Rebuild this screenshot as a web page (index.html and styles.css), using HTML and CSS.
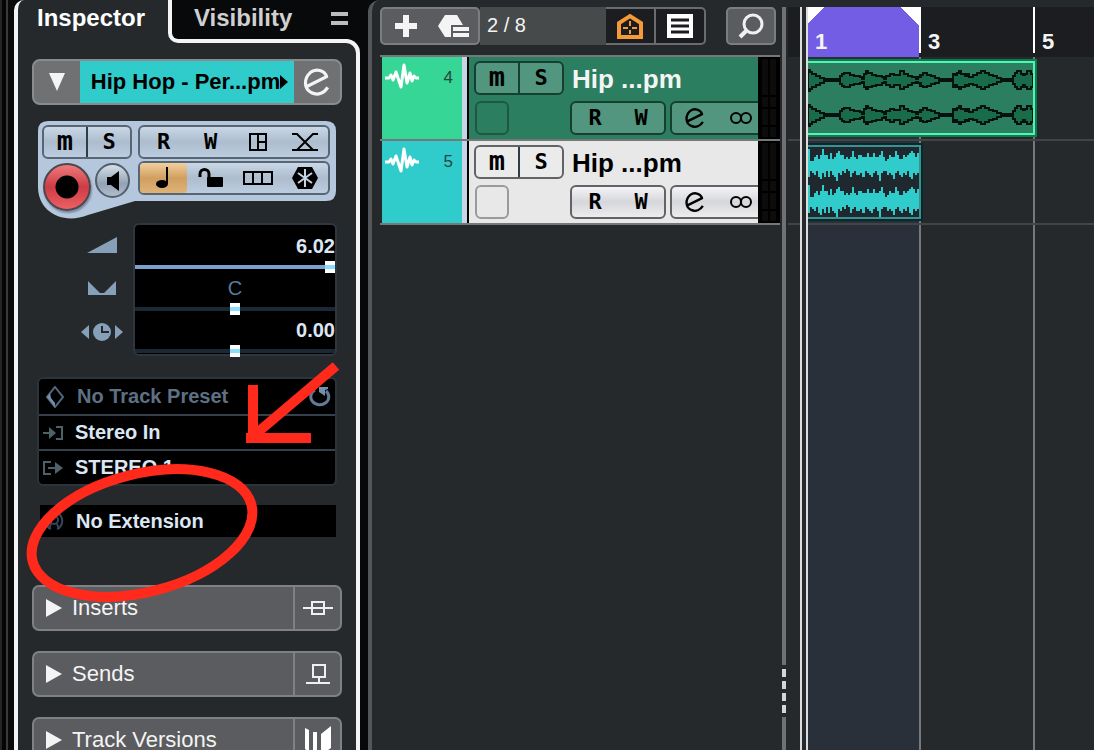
FILE: index.html
```html
<!DOCTYPE html>
<html lang="en">
<head>
  <meta charset="UTF-8">
  <title>Project</title>
  <link rel="stylesheet" href="styles.css">
</head>
<body>

  <!-- Shared icons -->
  <svg class="defs" aria-hidden="true">
    <symbol id="icon-e" viewBox="0 0 28 28">
      <path d="M5 18L23 9C21 3 13 1 8 5C1 11 2 21 9 24C15 27 21 24 24 19" fill="none" stroke="currentColor" stroke-width="3" stroke-linejoin="round"/>
    </symbol>
    <symbol id="icon-link" viewBox="0 0 22 14">
      <g fill="none" stroke="currentColor" stroke-width="2"><circle cx="6" cy="7" r="5"/><circle cx="16" cy="7" r="5"/></g>
    </symbol>
    <symbol id="icon-audio" viewBox="0 0 36 28">
      <path d="M1 15H5L7 12L9 17L12 9L15 18L17 24L20 2L23 20L26 10L28 18L30 13L32 15H35" fill="none" stroke="#fff" stroke-width="3" stroke-linejoin="round"/>
    </symbol>
    <symbol id="wave-top" viewBox="0 0 672 60" overflow="visible">
      <path d="M0 0V-33H6V-26H12V-20H24V-14H36V-8H48V-3H96V-12H102V-18H108V-22H126V-16H138V-13H156V-10H162V-4H168V-20H174V-27H180V-22H192V-17H204V-14H222V-9H228V-4H234V-14H246V-20H258V-15H276V-27H288V-20H300V-14H312V-10H324V-4H330V-10H336V-17H342V-22H354V-17H366V-13H378V-8H390V-3H432V-20H438V-15H444V-22H450V-27H456V-20H468V-14H474V-18H480V-11H492V-16H504V-21H516V-27H528V-21H540V-16H552V-12H564V-7H576V-3H612V-13H618V-21H624V-27H636V-20H642V-15H648V-20H654V-27H666V-20H672V0"/>
    </symbol>
  </svg>

  <div class="edge"></div>

  <!-- Inspector -->
  <aside class="inspector">
    <div class="tabs">
      <button class="tab active">Inspector</button>
      <div class="tabs-rest">
        <button class="tab">Visibility</button>
        <button class="tabs-menu" aria-label="Tab settings"><span></span><span></span></button>
      </div>
    </div>

    <div class="inspector-body">
      <div class="track-header">
        <button class="side-btn" aria-label="Collapse"><svg width="16" height="18" viewBox="0 0 16 18"><path d="M0 0h16L8 18z" fill="#f4f4f4"/></svg></button>
        <button class="track-title">Hip Hop - Per...pm<svg width="8" height="14" viewBox="0 0 8 14"><path d="M0 0l8 7-8 7z"/></svg></button>
        <button class="side-btn" aria-label="Edit channel"><svg width="30" height="30"><use href="#icon-e"/></svg></button>
      </div>

      <div class="controls">
        <svg class="controls-shape" viewBox="0 0 298 99" aria-hidden="true"><path d="M10 0H288Q298 0 298 10V70Q298 80 288 80H97L50 94C25 104 0 91 0 66V10Q0 0 10 0z" fill="#b4c7dc"/></svg>
        <div class="btn-group">
          <button class="m">m</button>
          <button>S</button>
        </div>
        <div class="btn-group plain">
          <button>R</button>
          <button>W</button>
          <button aria-label="Lanes"><svg width="18" height="18" viewBox="0 0 18 18"><path d="M1 1h16v16H1zM9 1v16M9 9h8" fill="none" stroke="#000" stroke-width="2"/></svg></button>
          <button aria-label="Crossfade"><svg width="26" height="20" viewBox="0 0 26 20"><path d="M0 2h5L21 18h5M26 2h-5L5 18H0M5 18h16" fill="none" stroke="#000" stroke-width="2"/></svg></button>
        </div>
        <div class="monitor">
          <button class="record" aria-label="Record"></button>
          <button class="speaker" aria-label="Monitor"><svg width="12" height="20" viewBox="0 0 12 20"><path d="M0 6h4l8-6v20l-8-6H0z"/></svg></button>
        </div>
        <div class="btn-group plain">
          <button class="lit" aria-label="Timebase"><svg width="16" height="22" viewBox="0 0 16 22"><ellipse cx="6" cy="17" rx="6" ry="4"/><path d="M10 0h2v17h-2z"/></svg></button>
          <button aria-label="Lock"><svg width="26" height="20" viewBox="0 0 26 20"><path d="M2 9V6C2 0 11 0 11 6V12" fill="none" stroke="#000" stroke-width="3"/><rect x="9" y="9" width="16" height="10" rx="1"/></svg></button>
          <button aria-label="Divide"><svg width="30" height="14" viewBox="0 0 30 14"><path d="M1 1h28v12H1zM10 1v12M19 1v12" fill="none" stroke="#000" stroke-width="2"/></svg></button>
          <button aria-label="Freeze"><svg width="26" height="24" viewBox="0 0 26 24"><path d="M6 1h14l6 11-6 11H6L0 12z"/><path d="M13 3v18M6 7l14 10M20 7L6 17" stroke="#c5d3e2" stroke-width="2"/></svg></button>
        </div>
      </div>

      <div class="faders">
        <div class="fader-icons">
          <svg width="32" height="16" viewBox="0 0 32 16"><path d="M1 16L31 0v16z"/></svg>
          <svg width="28" height="14" viewBox="0 0 28 14"><path d="M0 0l12 12h4L28 0v14H0z"/></svg>
          <svg width="42" height="18" viewBox="0 0 42 18"><path d="M0 9l8-7v14zM42 9l-8-7v14z"/><circle cx="21" cy="9" r="9"/><path d="M21 3v6h7" fill="none" stroke="#25292c" stroke-width="2"/></svg>
        </div>
        <div class="fader-box">
          <label for="volume">6.02</label>
          <input class="filled" id="volume" type="range" min="0" max="100" value="100">
          <label class="pan" for="pan">C</label>
          <input id="pan" type="range" min="0" max="100" value="50">
          <label for="delay">0.00</label>
          <input id="delay" type="range" min="0" max="100" value="50">
        </div>
      </div>

      <div class="routing">
        <button class="preset">
          <svg width="20" height="22" viewBox="0 0 20 22"><path d="M10 1l8 10-8 10-8-10z" fill="none" stroke="#52697e" stroke-width="2"/><path d="M2 11l3-4 1 5 4 5v4z" fill="#7590ab"/></svg>
          <span>No Track Preset</span>
          <svg width="22" height="22" viewBox="0 0 22 22"><path d="M6 4a9 8 0 1 0 11 1" fill="none" stroke="#607c97" stroke-width="3"/><path d="M10 1h9v2l-3 1v6l-6-4z" fill="#7590ab"/></svg>
        </button>
        <button>
          <svg width="20" height="16" viewBox="0 0 20 16"><path d="M0 8h7M13 2h6v12h-6" fill="none" stroke="#4d6268" stroke-width="2"/><path d="M6 2l7 6-7 6z" fill="#4d6268"/></svg>
          <span>Stereo In</span>
        </button>
        <button>
          <svg width="20" height="16" viewBox="0 0 20 16"><path d="M8 2H1v12h7M5 8h9" fill="none" stroke="#4d6268" stroke-width="2"/><path d="M12 2l8 6-8 6z" fill="#4d6268"/></svg>
          <span>STEREO 1</span>
        </button>
      </div>

      <button class="extension">
        <svg width="20" height="18" viewBox="0 0 20 18"><g fill="none" stroke="#33475c" stroke-width="2"><path d="M13 1c7 3 7 13 0 16M7 1c-7 3-7 13 0 16"/><circle cx="10" cy="8" r="4"/><path d="M7 12l-2 5M13 12l2 5"/></g></svg>
        <span>No Extension</span>
      </button>

      <div class="sections">
        <div class="section">
          <button class="section-name"><svg width="16" height="18" viewBox="0 0 16 18"><path d="M0 0l16 9-16 9z"/></svg>Inserts</button>
          <button class="section-icon" aria-label="Bypass inserts"><svg width="30" height="14" viewBox="0 0 30 14"><path d="M0 7h30M9 1h12v12H9z" fill="none" stroke="#f0f0f0" stroke-width="2"/></svg></button>
        </div>
        <div class="section">
          <button class="section-name"><svg width="16" height="18" viewBox="0 0 16 18"><path d="M0 0l16 9-16 9z"/></svg>Sends</button>
          <button class="section-icon" aria-label="Bypass sends"><svg width="24" height="22" viewBox="0 0 24 22"><path d="M7 2h12v12H7zM13 14v6M0 20h24" fill="none" stroke="#f0f0f0" stroke-width="2"/></svg></button>
        </div>
        <div class="section">
          <button class="section-name"><svg width="16" height="18" viewBox="0 0 16 18"><path d="M0 0l16 9-16 9z"/></svg>Track Versions</button>
          <button class="section-icon" aria-label="Track versions menu"><svg width="28" height="28" viewBox="0 0 28 28"><path d="M1 2l4 2v22l-4-3zM9 6h4v22l-4-2zM17 8l10-8v22l-10 7z" fill="#fff"/></svg></button>
        </div>
      </div>
    </div>

    <!-- Red marker drawn over the panel -->
    <svg class="marker" width="346" height="750" viewBox="14 0 346 750" aria-hidden="true">
      <g fill="none" stroke="#ff2a1c" stroke-width="10">
        <ellipse cx="142" cy="533" rx="113" ry="59" transform="rotate(-14.5 142 533)"/>
        <path d="M336 366L251 438M253 385V440M246 438H311"/>
      </g>
    </svg>
  </aside>

  <!-- Track list -->
  <main class="tracklist">
    <div class="toolbar">
      <div class="tool-group">
        <button aria-label="Add track"><svg width="22" height="22" viewBox="0 0 22 22"><path d="M11 0v22M0 11h22" stroke="#f4f4f4" stroke-width="6"/></svg></button>
        <button aria-label="Track presets"><svg width="32" height="24" viewBox="0 0 32 24"><path d="M7 1h12l6 10H13v12H7L0 12zM15 13h16v4H15zM15 19h16v4H15z" fill="#f4f4f4"/></svg></button>
      </div>
      <span class="counter">2 / 8</span>
      <div class="tool-group dark">
        <button aria-label="Filter agents"><svg width="28" height="26" viewBox="0 0 28 26"><path d="M3 24V10L14 3l11 7v14z" fill="none" stroke="#f59a35" stroke-width="4"/><path d="M14 8v5M14 17v4M7 15h5M16 15h5" stroke="#f59a35" stroke-width="2"/></svg></button>
        <button aria-label="Show list"><svg width="26" height="24" viewBox="0 0 26 24"><path d="M0 0h26v24H0z" fill="#fff"/><path d="M4 6h18M4 12h18M4 18h18" stroke="#1c1d20" stroke-width="3"/></svg></button>
      </div>
      <button class="search" aria-label="Find track"><svg width="26" height="26" viewBox="0 0 26 26"><circle cx="15" cy="11" r="9" fill="none" stroke="#f0f0f0" stroke-width="3"/><path d="M9 17l-7 7" stroke="#f0f0f0" stroke-width="4"/></svg></button>
    </div>

    <div class="tracks">
      <div class="track green">
        <div class="track-color">
          <svg width="36" height="28"><use href="#icon-audio"/></svg>
          <span>4</span>
        </div>
        <div class="track-main">
          <div class="btn-group">
            <button class="m">m</button>
            <button>S</button>
          </div>
          <div class="track-name">Hip ...pm</div>
          <button class="track-slot" aria-label="Track slot"></button>
          <div class="track-buttons">
            <div class="btn-group plain pair">
              <button>R</button>
              <button>W</button>
            </div>
            <div class="btn-group plain pair">
              <button aria-label="Edit channel"><svg width="22" height="22"><use href="#icon-e"/></svg></button>
              <button aria-label="Link"><svg width="22" height="14"><use href="#icon-link"/></svg></button>
            </div>
          </div>
        </div>
        <div class="meter"><i></i><i></i></div>
      </div>
      <div class="track cyan">
        <div class="track-color">
          <svg width="36" height="28"><use href="#icon-audio"/></svg>
          <span>5</span>
        </div>
        <div class="track-main">
          <div class="btn-group">
            <button class="m">m</button>
            <button>S</button>
          </div>
          <div class="track-name">Hip ...pm</div>
          <button class="track-slot" aria-label="Track slot"></button>
          <div class="track-buttons">
            <div class="btn-group plain pair">
              <button>R</button>
              <button>W</button>
            </div>
            <div class="btn-group plain pair">
              <button aria-label="Edit channel"><svg width="22" height="22"><use href="#icon-e"/></svg></button>
              <button aria-label="Link"><svg width="22" height="14"><use href="#icon-link"/></svg></button>
            </div>
          </div>
        </div>
        <div class="meter"><i></i><i></i></div>
      </div>
    </div>
  </main>

  <div class="divider">
    <span class="bar"></span>
    <i></i><i></i><i></i><i></i>
    <span class="bar end"></span>
  </div>

  <!-- Timeline -->
  <section class="timeline">
    <div class="ruler columns">
      <div></div>
      <div class="bar-number cycle">1</div>
      <div class="bar-number">3</div>
      <div class="bar-number">5</div>
    </div>
    <div class="lanes">
      <div class="grid-lines columns">
        <div></div>
        <div class="range"></div>
        <div></div>
        <div></div>
      </div>
      <div class="lane columns">
        <div class="clip clip-green">
          <svg viewBox="0 0 672 216" preserveAspectRatio="none" shape-rendering="crispEdges">
            <g fill="#186c49" stroke="#06120d" stroke-width="6">
              <use href="#wave-top" width="672" height="60" y="53"/>
              <use href="#wave-top" width="672" height="60" y="-53" transform="scale(1 -1)"/>
              <use href="#wave-top" width="672" height="60" y="161"/>
              <use href="#wave-top" width="672" height="60" y="-161" transform="scale(1 -1)"/>
            </g>
          </svg>
        </div>
      </div>
      <div class="lane columns">
        <div class="clip clip-cyan">
          <svg viewBox="0 0 55 35" preserveAspectRatio="none" shape-rendering="crispEdges">
            <path id="beat" fill="#30cccc" d="M0 1h1V7h2V5h1V4h1V6h1V4h1V1h1V4h2V6h1V3h1V6h1V5h1V3h1V2h1V4h2V6h1V5h1V6h1V5h1V2h1V5h1V6h1V4h2V5h2V3h1V5h2V3h1V5h2V4h1V2h1V5h1V7h1V6h1V4h1V5h2V2h1V4h1V6h2V4h1V5h1V4h1V3h1V2h1V3h1V5h1V3h1V13h-1V14h-1V13h-1V16h-1V15h-1V12h-1V14h-1V13h-1V15h-1V14h-1V12h-1V13h-1V16h-1V14h-1V13h-1V14h-1V12h-2V13h-1V17h-1V14h-1V12h-1V13h-1V15h-1V14h-1V13h-1V12h-1V15h-1V13h-1V14h-2V12h-1V13h-1V15h-1V12h-1V11h-1V13h-1V12h-1V14h-1V13h-1V17h-1V15h-1V14h-1V12h-1V15h-1V12h-1V15h-1V13h-1V16h-1V15h-1V12h-1V14h-1V13h-1V12h-1V15H0z"/>
            <use href="#beat" y="18"/>
          </svg>
        </div>
      </div>
    </div>
    <div class="cursors"></div>
  </section>

</body>
</html>
```

FILE: styles.css
```css
* {
  box-sizing: border-box;
}

body {
  margin: 0;
  display: flex;
  height: 100vh;
  overflow: hidden;
  background: #08090a;
  color: #f4f4f4;
  font-family: "Liberation Sans", Arial, sans-serif;
}

button {
  display: flex;
  align-items: center;
  justify-content: center;
  margin: 0;
  padding: 0;
  border: none;
  background: none;
  color: inherit;
  font: inherit;
  cursor: pointer;
}

svg {
  display: block;
  flex: none;
}

.defs {
  position: absolute;
  width: 0;
  height: 0;
}

.edge {
  flex: 0 0 14px;
  background: linear-gradient(90deg, #242424 2px, #050505 2px, #050505 6px, #3a3a3a 6px, #3a3a3a 8px, #0a0a0a 8px);
}

/* Inspector */
.inspector {
  position: relative;
  flex: 0 0 346px;
}

.tabs {
  position: relative;
  z-index: 1;
  display: flex;
  height: 43px;
  background: linear-gradient(#25292c, #25292c) 140px 0 / 24px 100% no-repeat;
}

.tab {
  font-size: 24px;
  font-weight: bold;
  color: #d0d0d0;
}

.tab.active {
  flex: 0 0 154px;
  padding: 0 4px 7px 0;
  border-left: 4px solid #f4f4f4;
  border-top-left-radius: 10px;
  background: #25292c;
  color: #fff;
}

.tabs-rest {
  flex: 1;
  display: flex;
  align-items: center;
  justify-content: space-between;
  margin-right: 12px;
  padding: 0 0 3px 22px;
  border-left: 4px solid #f4f4f4;
  border-bottom: 4px solid #f4f4f4;
  border-bottom-left-radius: 10px;
  background: #08090a;
}

.tabs-menu {
  flex-direction: column;
  gap: 5px;
}

.tabs-menu span {
  width: 17px;
  height: 4px;
  background: #bdbdbd;
}

.inspector-body {
  margin-top: -4px;
  height: calc(100vh - 39px);
  padding: 16px 14px 0;
  border: 4px solid #f4f4f4;
  border-bottom: none;
  border-top-right-radius: 14px;
  background: #25292c;
  overflow: hidden;
}

.track-header {
  display: flex;
  height: 46px;
  border: 2px solid #8a8b8d;
  border-radius: 8px;
  background: #707173;
  overflow: hidden;
}

.side-btn {
  flex: 0 0 46px;
}

.track-title {
  flex: 1;
  margin: -2px 0;
  padding-left: 5px;
  background: #30cccc;
  color: #000;
  font-size: 22px;
  font-weight: bold;
  white-space: nowrap;
}

.controls {
  position: relative;
  display: grid;
  grid-template-columns: 90px 1fr;
  grid-template-rows: 34px 34px;
  gap: 2px 6px;
  margin: 16px 6px 0;
  padding: 4px 6px 23px 4px;
}

.controls > * {
  position: relative;
}

.controls .controls-shape {
  position: absolute;
  top: 0;
  left: 0;
  width: 100%;
}

.btn-group {
  display: flex;
  height: 34px;
  border: 2px solid #586674;
  border-radius: 6px;
  background: linear-gradient(#c9d7e6, #adbdce 50%, #bccde0);
  color: #000;
  font-family: "DejaVu Sans Mono", monospace;
  font-size: 22px;
  font-weight: bold;
  line-height: 22px;
}

.btn-group button {
  flex: 1;
}

.btn-group:not(.plain) button + button {
  border-left: 2px solid #333c44;
}

.btn-group .m {
  padding-bottom: 2px;
  font-size: 27px;
}

.btn-group .lit {
  border-radius: 4px;
  background: linear-gradient(#f1cf9f, #d19f60 50%, #deb377);
}

.monitor {
  display: flex;
  align-items: flex-start;
  gap: 4px;
  padding: 2px 0 0 1px;
}

.record {
  flex: 0 0 48px;
  height: 48px;
  border: 2px solid #4b4650;
  border-radius: 50%;
  background: radial-gradient(circle, #000 11px, transparent 12px), linear-gradient(#ee7a7c, #cc3c44 50%, #ec6064);
  box-shadow: 1px 2px 2px #7888a0;
}

.speaker {
  flex: 0 0 35px;
  height: 35px;
  border: 2px solid #535e6a;
  border-radius: 50%;
  background: linear-gradient(#d5dfea, #94a3b3 60%, #adbdcc);
}

.faders {
  display: flex;
  margin: 5px 5px 0 6px;
}

.fader-icons {
  flex: 0 0 95px;
  display: flex;
  flex-direction: column;
  align-items: center;
  gap: 28px;
  padding: 14px 0 0 33px;
  fill: #86a0ba;
}

.fader-box {
  flex: 1;
  display: flex;
  flex-direction: column;
  padding: 6px 0 0;
  border: 2px solid #2e3740;
  border-radius: 6px;
  background: #000;
}

.fader-box label {
  height: 30px;
  color: #dce6f4;
  font-size: 20px;
  font-weight: bold;
  line-height: 30px;
  text-align: right;
}

.fader-box .pan {
  color: #5b7b9c;
  font-weight: normal;
  text-align: center;
}

.fader-box input {
  appearance: none;
  width: 100%;
  height: 12px;
  margin: 0;
  background: linear-gradient(#1c2833, #1c2833) center / 100% 4px no-repeat;
}

.fader-box input.filled {
  background-image: linear-gradient(#7ba0ca, #7ba0ca);
}

.fader-box input:last-child {
  margin-bottom: -3px;
}

.fader-box input::-webkit-slider-thumb {
  appearance: none;
  width: 10px;
  height: 12px;
  background: linear-gradient(#fff 4px, #8adfff 4px, #8adfff 8px, #fff 8px);
}

.routing {
  margin: 21px 5px 0;
  border: 2px solid #2b333b;
  border-radius: 6px;
  background: #000;
}

.routing button,
.extension {
  justify-content: flex-start;
  gap: 12px;
  width: 100%;
  height: 35px;
  padding: 0 4px;
  color: #dce6f4;
  font-size: 20px;
  font-weight: bold;
}

.routing button + button {
  border-top: 2px solid #37414b;
}

.routing span {
  flex: 1;
  text-align: left;
}

.routing .preset {
  padding-left: 6px;
  color: #5e7084;
}

.inspector-body .extension {
  width: calc(100% - 14px);
  height: 32px;
  margin: 19px 6px 0 8px;
  background: #000;
}

.sections {
  display: grid;
  gap: 20px;
  margin-top: 48px;
}

.section {
  display: flex;
  height: 46px;
  border: 2px solid #808184;
  border-radius: 7px;
  background: #5b5c5f;
  font-size: 22px;
}

.section-name {
  flex: 1;
  justify-content: flex-start;
  gap: 10px;
  padding-left: 12px;
  fill: #f4f4f4;
}

.section-icon {
  flex: 0 0 47px;
  border-left: 2px solid #808184;
}

.marker {
  position: absolute;
  top: 0;
  left: 0;
  z-index: 2;
  pointer-events: none;
}

/* Track list */
.tracklist {
  flex: 0 0 414px;
  min-width: 0;
  margin-left: 8px;
  padding: 7px 2px 0 8px;
  border-left: 4px solid #55565a;
  border-top-left-radius: 12px;
  background: #25292c;
}

.toolbar {
  display: flex;
  height: 38px;
  padding-right: 4px;
}

.tool-group {
  flex: 0 0 100px;
  display: flex;
  border: 2px solid #7c7d80;
  border-radius: 5px;
  background: #5b5c5f;
}

.tool-group button {
  flex: 1;
}

.tool-group.dark {
  border-left: none;
  border-radius: 0 5px 5px 0;
  border-color: #6a6b6e;
  background: #1c1d20;
}

.dark button + button {
  border-left: 2px solid #6a6b6e;
}

.counter {
  flex: 1;
  padding-left: 7px;
  background: #464a4b;
  font-size: 20px;
  line-height: 37px;
}

.search {
  flex: 0 0 50px;
  margin-left: 20px;
  border: 2px solid #7c7d80;
  border-radius: 5px;
  background: #5b5c5f;
}

.tracks {
  margin-top: 10px;
  border-top: 2px solid #77787a;
}

.track {
  display: flex;
  height: 84px;
  padding-left: 2px;
  border-bottom: 2px solid #77787a;
}

.track-color {
  flex: 0 0 85px;
  display: flex;
  justify-content: space-between;
  padding: 6px 9px 0 2px;
  border-right: 5px solid #c6d4e6;
  color: #27443f;
  font-size: 17px;
  line-height: 30px;
}

.green .track-color {
  background: #36d696;
}

.cyan .track-color {
  background: #30cccc;
}

.track-main {
  flex: 1;
  min-width: 0;
  display: grid;
  grid-template-columns: 90px 1fr;
  grid-template-rows: 34px 34px;
  gap: 6px;
  padding: 4px 0 0 5px;
  border-left: 2px solid #000;
  overflow: hidden;
}

.green .track-main {
  background: #2b7e60;
}

.cyan .track-main {
  background: #e8e8e8;
  color: #000;
}

.track-name {
  padding-left: 2px;
  font-size: 26px;
  font-weight: bold;
  line-height: 36px;
  white-space: nowrap;
}

.track-slot {
  width: 34px;
  height: 34px;
  margin-left: 1px;
  border: 2px solid #1e5843;
  border-radius: 6px;
}

.cyan .track-slot {
  border-color: #9a9a9a;
}

.track-buttons {
  display: flex;
  gap: 4px;
}

.pair {
  flex: 0 0 96px;
}

.green .btn-group {
  border-color: #173f30;
  background: #52967f;
}

.green .btn-group button + button {
  border-color: #173f30;
}

.cyan .btn-group {
  border-color: #636366;
  background: #ebebec;
}

.cyan .plain {
  background: linear-gradient(#f4f4f6, #d6d7da 50%, #ececee);
}

.meter {
  flex: 0 0 22px;
  display: flex;
  gap: 2px;
  padding: 2px 4px;
  background: #000;
}

.meter i {
  flex: 1;
  background: linear-gradient(#0c0c0c 36px, #000 36px, #000 38px, #0c0c0c 38px, #0c0c0c 48px, #000 48px, #000 50px, #0c0c0c 50px, #0c0c0c 66px, #000 66px, #000 68px, #0c0c0c 68px);
}

/* Divider with the drag handle */
.divider {
  flex: 0 0 4px;
  display: flex;
  flex-direction: column;
  gap: 4px;
  padding-top: 7px;
  background: #25292c;
}

.divider .bar {
  flex: 1;
  background: #707173;
}

.divider .end {
  flex: 0 0 33px;
}

.divider i {
  height: 8px;
  background: #d4d6d8;
}

/* Timeline */
.timeline {
  position: relative;
  flex: 1;
  display: flex;
  flex-direction: column;
  padding: 7px 0 0 2px;
  background: #25292c;
}

.columns {
  display: grid;
  grid-template-columns: 18px 113px 114px 1fr;
}

.ruler {
  height: 50px;
  background: #1c1d20;
}

.bar-number {
  padding: 22px 0 0 9px;
  background: linear-gradient(#fff, #fff) left top / 2px 46px no-repeat;
  font-size: 22px;
  font-weight: bold;
  line-height: 26px;
}

.cycle {
  background: linear-gradient(135deg, #fff 13px, transparent 13px), linear-gradient(225deg, #fff 13px, transparent 13px), #735de4;
}

.lanes {
  position: relative;
  flex: 1;
}

.grid-lines {
  position: absolute;
  inset: 0;
}

.grid-lines div + div {
  border-left: 2px solid #77787a;
}

.grid-lines .range {
  background: #29303a;
}

.lane {
  position: relative;
  height: 84px;
  padding: 4px 0;
  border-bottom: 2px solid #434446;
}

.clip {
  display: flex;
  height: 74px;
  margin-right: -2px;
}

.clip svg {
  width: 100%;
  height: 100%;
}

.clip-green {
  grid-column: 2 / 4;
  border: 2px solid #4ff5b2;
  outline: 2px solid #12794f;
  background: #2b7e60;
}

.clip-cyan {
  grid-column: 2 / 3;
  border: 2px solid #3b9090;
  outline: 2px solid #062a2c;
  background: #1f282e;
}

/* Project cursor and left locator lines */
.cursors {
  position: absolute;
  top: 7px;
  bottom: 0;
  left: 14px;
  width: 8px;
  border: solid #dcdcdc;
  border-width: 0 2px;
  background: #25292c;
}
```
